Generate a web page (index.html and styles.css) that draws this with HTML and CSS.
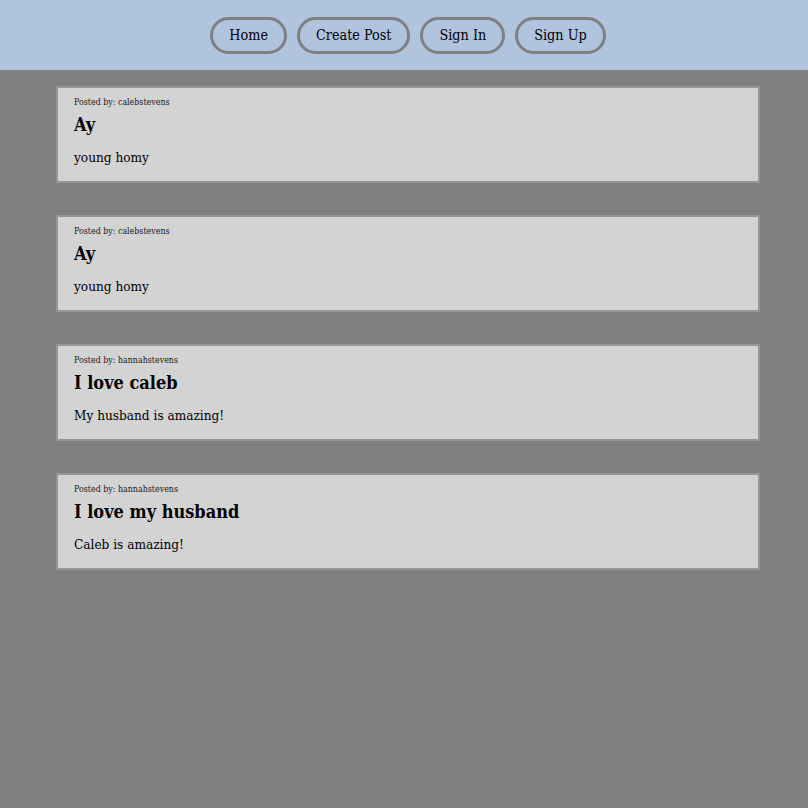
FILE: index.html
```html
<!DOCTYPE html>
<html>
<head>
<meta charset="utf-8">
<link rel="stylesheet" href="styles.css">
</head>
<body>
<nav class="nav">
  <a class="nav-btn">Home</a>
  <a class="nav-btn">Create Post</a>
  <a class="nav-btn">Sign In</a>
  <a class="nav-btn">Sign Up</a>
</nav>
<main class="posts">
  <article class="post">
    <p class="author">Posted by: calebstevens</p>
    <h2 class="title">Ay</h2>
    <p class="body">young homy</p>
  </article>
  <article class="post">
    <p class="author">Posted by: calebstevens</p>
    <h2 class="title">Ay</h2>
    <p class="body">young homy</p>
  </article>
  <article class="post">
    <p class="author">Posted by: hannahstevens</p>
    <h2 class="title">I love caleb</h2>
    <p class="body">My husband is amazing!</p>
  </article>
  <article class="post">
    <p class="author">Posted by: hannahstevens</p>
    <h2 class="title">I love my husband</h2>
    <p class="body">Caleb is amazing!</p>
  </article>
</main>
</body>
</html>
```
FILE: styles.css
```css
html, body {
  margin: 0;
  padding: 0;
  background: #808080;
  font-family: "DejaVu Serif Condensed", "DejaVu Serif", serif;
  font-stretch: semi-condensed;
  min-height: 100%;
}
.nav {
  background: #b0c4de;
  height: 70px;
  display: flex;
  justify-content: center;
  align-items: center;
  gap: 10px;
  padding-left: 8px;
}
.nav-btn {
  display: block;
  font-size: 14.25px;
  color: #000;
  border: 3px solid #808080;
  border-radius: 20px;
  padding: 0 16px;
  height: 31px;
  line-height: 31px;
}
.posts {
  display: flex;
  flex-direction: column;
  gap: 32px;
  padding: 16px 48px 16px 56px;
}
.post {
  background: #d3d3d3;
  border: 2px solid #969696;
  padding: 7px 16px 0;
  height: 97px;
  box-sizing: border-box;
}
.author {
  margin: 0;
  font-size: 8.8px;
  line-height: 14px;
  color: #1a1a1a;
}
.title {
  margin: 4px 0 0;
  font-size: 18px;
  line-height: 24px;
}
.body {
  margin: 11px 0 0;
  font-size: 13.5px;
  line-height: 18px;
}
```
